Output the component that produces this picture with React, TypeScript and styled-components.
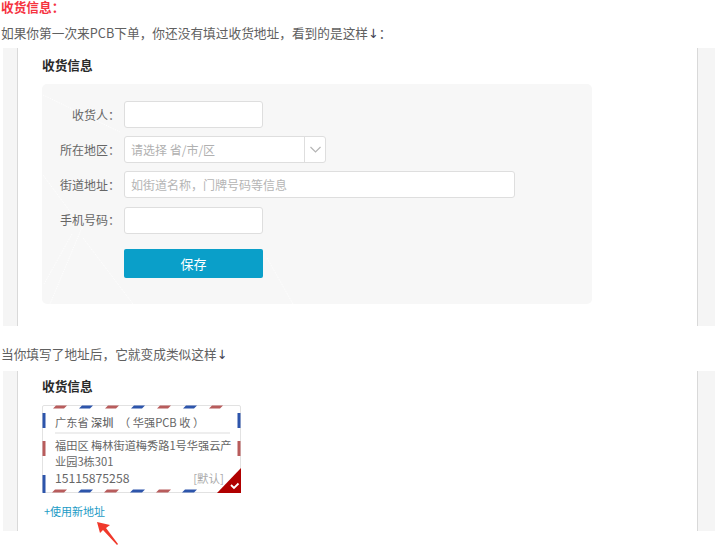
import styled, { createGlobalStyle } from "styled-components";

const GlobalStyle = createGlobalStyle`
  html, body {
    margin: 0;
    padding: 0;
    background: #fff;
  }
  body {
    width: 715px;
    height: 545px;
    overflow: hidden;
    font-family: "Noto Sans CJK SC", "Noto Sans", sans-serif;
    font-size: 12.7px;
    color: #606060;
  }
`;

const fields = [
  { label: "收货人：", kind: "short" },
  { label: "所在地区：", kind: "select", placeholder: "请选择 省/市/区" },
  { label: "街道地址：", kind: "long", placeholder: "如街道名称，门牌号码等信息" },
  { label: "手机号码：", kind: "short" },
];

// stripes along the card edge: [x, colour]
const topStripes: [number, string][] = [
  [11, "#b85c5c"], [37, "#2d55ab"], [63, "#b85c5c"], [89, "#2d55ab"],
  [115, "#b85c5c"], [141, "#2d55ab"], [167, "#b85c5c"],
];
const bottomStripes: [number, string][] = [
  [10, "#b85c5c"], [36, "#2d55ab"], [62, "#b85c5c"], [88, "#2d55ab"],
  [114, "#b85c5c"], [140, "#2d55ab"],
];
const sideStripes: [number, number, string][] = [
  [8, 15, "#2d55ab"], [36, 15, "#b85c5c"], [70, 18, "#2d55ab"],
];

// faint white lines of the form's background texture
const textureLines = [
  "M1 11L78 48",
  "M1 91L41 145",
  "M41 141L8 220",
  "M30 150L2 200",
  "M41 154L91 220",
  "M225 174L251 220",
];

function AirmailFrame() {
  return (
    <Frame viewBox="0 0 199 88" width="199" height="88" aria-hidden="true">
      {topStripes.map(([x, c]) => (
        <polygon key={x} points={`${x + 3},0.5 ${x + 14},0.5 ${x + 11},3.5 ${x},3.5`} fill={c} />
      ))}
      {bottomStripes.map(([x, c]) => (
        <polygon key={x} points={`${x + 3},84.5 ${x + 15},84.5 ${x + 12},87.5 ${x},87.5`} fill={c} />
      ))}
      {sideStripes.map(([y, h, c]) => (
        <g key={y} fill={c}>
          <rect x="0.5" y={y} width="3" height={h} />
          <rect x="195.5" y={y} width="3" height={h} />
        </g>
      ))}
      <polygon points="199,63 199,88 175,88" fill="#b00000" />
      <path d="M189 80l3 3 4.5-4.5" fill="none" stroke="#fff" strokeWidth="1.8" />
    </Frame>
  );
}

export default function App() {
  return (
    <Page>
      <GlobalStyle />
      <RedTitle>收货信息：</RedTitle>
      <Para>如果你第一次来PCB下单，你还没有填过收货地址，看到的是这样<Down>↓</Down>：</Para>
      <Shot $height={278}>
        <ShotInner>
          <ShotTitle>收货信息</ShotTitle>
          <FormBox>
            <Texture width="550" height="220" viewBox="0 0 550 220" aria-hidden="true">
              {textureLines.map((d) => (
                <path key={d} d={d} fill="none" stroke="#fff" strokeDasharray="1 1" />
              ))}
            </Texture>
            {fields.map((f) => (
              <FormRow key={f.label}>
                <FieldLabel>{f.label}</FieldLabel>
                {f.kind === "select" ? (
                  <SelectBox>
                    <SelectText>{f.placeholder}</SelectText>
                    <SelectArrow>
                      <svg width="11" height="7" viewBox="0 0 11 7" fill="none" stroke="#b5b5b5" strokeWidth="1.2">
                        <path d="M0.5 1l5 5 5-5" />
                      </svg>
                    </SelectArrow>
                  </SelectBox>
                ) : (
                  <InputBox $long={f.kind === "long"}>{f.placeholder}</InputBox>
                )}
              </FormRow>
            ))}
            <SaveButton>保存</SaveButton>
          </FormBox>
        </ShotInner>
      </Shot>
      <Para $top={19}>当你填写了地址后，它就变成类似这样<Down>↓</Down></Para>
      <Shot $height={160} $top={8}>
        <ShotInner>
          <ShotTitle $tight>收货信息</ShotTitle>
          <AddressCard>
            <AirmailFrame />
            <CardHead>
              广东省 <b>深圳</b>　（ 华强PCB 收 ）
            </CardHead>
            <CardAddress>福田区 梅林街道梅秀路1号华强云产业园3栋301</CardAddress>
            <CardFoot>
              <span>15115875258</span>
              <DefaultMark>[默认]</DefaultMark>
            </CardFoot>
          </AddressCard>
          <NewAddress>+使用新地址</NewAddress>
          <Pointer width="26" height="30" viewBox="0 0 26 30" aria-hidden="true">
            <polygon points="0,0 13,3 9,6 21,22 20,23 6,8 3,11" fill="#f0392b" />
          </Pointer>
        </ShotInner>
      </Shot>
    </Page>
  );
}

const Page = styled.div`
  width: 715px;
  height: 545px;
  overflow: hidden;
  line-height: 18px;
`;

const RedTitle = styled.div`
  color: #f5333f;
  font-weight: 700;
  height: 14px;
  line-height: 14px;
  padding-left: 1px;
`;

const Para = styled.p<{ $top?: number }>`
  margin: ${(p) => p.$top ?? 10}px 0 0;
  padding-left: 1px;
  height: 18px;
  white-space: nowrap;
`;

const Down = styled.span`
  color: #445;
  font-family: "DejaVu Sans", sans-serif;
`;

const Shot = styled.div<{ $height: number; $top?: number }>`
  box-sizing: border-box;
  height: ${(p) => p.$height}px;
  margin: ${(p) => p.$top ?? 6}px 0 0 3px;
  background: #f5f5f5;
  padding: 0 17px 0 14px;
`;

const ShotInner = styled.div`
  position: relative;
  box-sizing: border-box;
  height: 100%;
  background: #fff;
  border-left: 1px solid #d9d9d9;
  border-right: 1px solid #d9d9d9;
  padding-left: 24px;
`;

const ShotTitle = styled.div<{ $tight?: boolean }>`
  font-weight: 700;
  color: #2a2a2a;
  padding-top: ${(p) => (p.$tight ? 6 : 8)}px;
  margin-bottom: 10px;
`;

const FormBox = styled.div`
  position: relative;
  box-sizing: border-box;
  width: 550px;
  height: 220px;
  background: #f7f7f7;
  border-radius: 5px;
  padding-top: 17px;
`;

const Texture = styled.svg`
  position: absolute;
  left: 0;
  top: 0;
`;

const FormRow = styled.div`
  position: relative;
  display: flex;
  align-items: center;
  height: 27px;
  margin-bottom: 8.2px;
`;

const FieldLabel = styled.div`
  width: 82px;
  flex: none;
  padding-right: 4px;
  box-sizing: border-box;
  text-align: right;
  color: #666;
  font-size: 12px;
  white-space: nowrap;
`;

const InputBox = styled.div<{ $long?: boolean }>`
  box-sizing: border-box;
  width: ${(p) => (p.$long ? 391 : 139)}px;
  height: 27px;
  line-height: 25px;
  padding-left: 6px;
  background: #fff;
  border: 1px solid #dedede;
  border-radius: 3px;
  color: #b5b5b5;
  font-size: 12px;
`;

const SelectBox = styled.div`
  box-sizing: border-box;
  display: flex;
  width: 202px;
  height: 27px;
  background: #fff;
  border: 1px solid #dedede;
  border-radius: 3px;
`;

const SelectText = styled.div`
  flex: 1;
  padding-left: 6px;
  line-height: 25px;
  color: #b0b0b0;
  font-size: 12px;
`;

const SelectArrow = styled.div`
  display: flex;
  align-items: center;
  justify-content: center;
  width: 20px;
  border-left: 1px solid #dedede;
`;

const SaveButton = styled.div`
  position: relative;
  width: 139px;
  height: 29px;
  margin: 15px 0 0 82px;
  background: #0a9fc9;
  border-radius: 2px;
  color: #fff;
  font-size: 13px;
  line-height: 29px;
  text-align: center;
`;

const AddressCard = styled.div`
  position: relative;
  box-sizing: border-box;
  width: 199px;
  height: 88px;
  padding: 6px 2px 0 12px;
  border: 1px solid #e2e2e2;
  border-radius: 2px;
  color: #666;
  font-size: 11.2px;
`;

const Frame = styled.svg`
  position: absolute;
  left: -1px;
  top: -1px;
`;

const CardHead = styled.div`
  width: 175px;
  height: 20px;
  line-height: 20px;
  border-bottom: 2px solid #eee;
  white-space: nowrap;

  b {
    font-weight: 500;
  }
`;

const CardAddress = styled.div`
  margin-top: 3px;
  line-height: 16px;
`;

const CardFoot = styled.div`
  display: flex;
  justify-content: space-between;
  line-height: 18px;
  font-size: 12.2px;
`;

const DefaultMark = styled.span`
  color: #aaa;
  font-size: 11.5px;
  margin-right: 14px;
`;

const NewAddress = styled.div`
  margin-top: 9px;
  padding-left: 2px;
  color: #1b9bc6;
  font-size: 11px;
`;

const Pointer = styled.svg`
  position: absolute;
  left: 79px;
  top: 151px;
`;
